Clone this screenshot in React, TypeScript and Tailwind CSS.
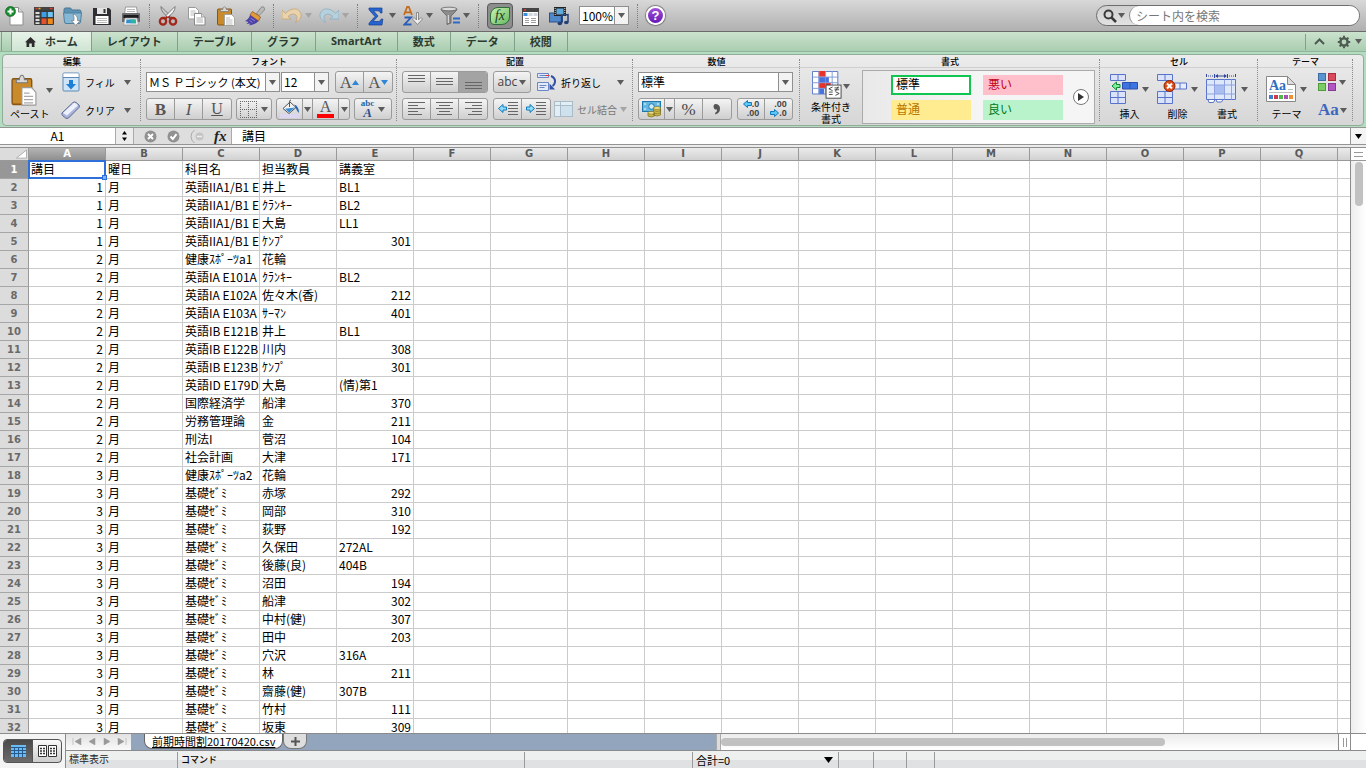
// src/App.tsx
import type { ReactNode } from 'react'

interface Lesson {
  period: string
  subject: string
  teacher: string
  room: string
}

const lessons: Lesson[] = [
  { period: '1', subject: '英語IIA1/B1 E', teacher: '井上', room: 'BL1' },
  { period: '1', subject: '英語IIA1/B1 E', teacher: 'ｸﾗﾝｷｰ', room: 'BL2' },
  { period: '1', subject: '英語IIA1/B1 E', teacher: '大島', room: 'LL1' },
  { period: '1', subject: '英語IIA1/B1 E', teacher: 'ｹﾝﾌﾟ', room: '301' },
  { period: '2', subject: '健康ｽﾎﾟｰﾂa1', teacher: '花輪', room: '' },
  { period: '2', subject: '英語IA E101A', teacher: 'ｸﾗﾝｷｰ', room: 'BL2' },
  { period: '2', subject: '英語IA E102A', teacher: '佐々木(香)', room: '212' },
  { period: '2', subject: '英語IA E103A', teacher: 'ｻｰﾏﾝ', room: '401' },
  { period: '2', subject: '英語IB E121B', teacher: '井上', room: 'BL1' },
  { period: '2', subject: '英語IB E122B', teacher: '川内', room: '308' },
  { period: '2', subject: '英語IB E123B', teacher: 'ｹﾝﾌﾟ', room: '301' },
  { period: '2', subject: '英語ID E179D', teacher: '大島', room: '(情)第1' },
  { period: '2', subject: '国際経済学', teacher: '船津', room: '370' },
  { period: '2', subject: '労務管理論', teacher: '金', room: '211' },
  { period: '2', subject: '刑法I', teacher: '菅沼', room: '104' },
  { period: '2', subject: '社会計画', teacher: '大津', room: '171' },
  { period: '3', subject: '健康ｽﾎﾟｰﾂa2', teacher: '花輪', room: '' },
  { period: '3', subject: '基礎ｾﾞﾐ', teacher: '赤塚', room: '292' },
  { period: '3', subject: '基礎ｾﾞﾐ', teacher: '岡部', room: '310' },
  { period: '3', subject: '基礎ｾﾞﾐ', teacher: '荻野', room: '192' },
  { period: '3', subject: '基礎ｾﾞﾐ', teacher: '久保田', room: '272AL' },
  { period: '3', subject: '基礎ｾﾞﾐ', teacher: '後藤(良)', room: '404B' },
  { period: '3', subject: '基礎ｾﾞﾐ', teacher: '沼田', room: '194' },
  { period: '3', subject: '基礎ｾﾞﾐ', teacher: '船津', room: '302' },
  { period: '3', subject: '基礎ｾﾞﾐ', teacher: '中村(健)', room: '307' },
  { period: '3', subject: '基礎ｾﾞﾐ', teacher: '田中', room: '203' },
  { period: '3', subject: '基礎ｾﾞﾐ', teacher: '穴沢', room: '316A' },
  { period: '3', subject: '基礎ｾﾞﾐ', teacher: '林', room: '211' },
  { period: '3', subject: '基礎ｾﾞﾐ', teacher: '齋藤(健)', room: '307B' },
  { period: '3', subject: '基礎ｾﾞﾐ', teacher: '竹村', room: '111' },
  { period: '3', subject: '基礎ｾﾞﾐ', teacher: '坂東', room: '309' },
]

const header = ['講目', '曜日', '科目名', '担当教員', '講義室']
const rows: string[][] = [
  header,
  ...lessons.map((l) => [l.period, '月', l.subject, l.teacher, l.room]),
]
const letters = 'ABCDEFGHIJKLMNOPQ'.split('')
const tabs = ['レイアウト', 'テーブル', 'グラフ', 'SmartArt', '数式', 'データ', '校閲']

// ---------- 共通パーツ ----------

function Caret({ light }: { light?: boolean }) {
  return (
    <svg viewBox="0 0 7 5" className={`h-[5px] w-[7px] shrink-0 ${light ? 'fill-[#a5a5a5]' : 'fill-[#5c5c5c]'}`}>
      <path d="M0 0h7L3.500 5z" />
    </svg>
  )
}

function ToolButton({ label, children, caret, light }: { label: string; children: ReactNode; caret?: boolean; light?: boolean }) {
  return (
    <button type="button" aria-label={label} className="flex shrink-0 items-center gap-[3px]">
      <svg viewBox="0 0 20 20" className="h-5 w-5">{children}</svg>
      {caret && <Caret light={light} />}
    </button>
  )
}

function Divider() {
  return <span className="mx-2 h-6 w-0 shrink-0 border-l border-dotted border-[#7d7d7d]" />
}

function Group({ title, className, children }: { title: string; className: string; children: ReactNode }) {
  return (
    <section className={`relative flex flex-col ${className}`}>
      <h2 className="h-[13px] border-b border-[#cfcfcf] text-center text-[9px] leading-[13px] font-medium text-black">{title}</h2>
      <div className="flex flex-1 items-start pt-[3px]">{children}</div>
      <span className="absolute top-1 right-0 bottom-1 border-r border-dotted border-[#8a8a8a]" />
    </section>
  )
}

function Segment({ children }: { children: ReactNode }) {
  return (
    <div className="flex h-[22px] shrink-0 divide-x divide-[#9b9b9b] overflow-hidden rounded-[3px] border border-[#9b9b9b] bg-linear-to-b from-[#f4f4f4] to-[#cfcfcf]">
      {children}
    </div>
  )
}

function Seg({ label, width = 'w-7', on, children }: { label: string; width?: string; on?: boolean; children: ReactNode }) {
  return (
    <button type="button" aria-label={label} className={`flex items-center justify-center gap-1 ${width} ${on ? 'bg-[#a3a3a3]' : ''}`}>
      {children}
    </button>
  )
}

function Picker({ label, value, className }: { label: string; value: string; className: string }) {
  return (
    <div className={`relative flex shrink-0 border border-[#8f8f8f] bg-white text-black ${className}`}>
      <select aria-label={label} className="w-full appearance-none bg-transparent pr-3.5 pl-0.5 outline-none">
        <option>{value}</option>
      </select>
      <span className="pointer-events-none absolute inset-y-0 right-0 flex w-3.5 items-center justify-center border-l border-[#8f8f8f] bg-[#f3f3f3]">
        <Caret />
      </span>
    </div>
  )
}

function BigButton({ label, children }: { label: ReactNode; children: ReactNode }) {
  return (
    <button type="button" className="flex shrink-0 flex-col items-center gap-[3px]">
      <span className="flex h-8 items-center gap-1">
        {children}
        <Caret />
      </span>
      <span className="text-[10px] leading-[12px] text-black">{label}</span>
    </button>
  )
}

// 横線を並べた配置アイコン。l は各行の [x, 幅]
function Lines({ rows: l, top = 1 }: { rows: number[][]; top?: number }) {
  return (
    <svg viewBox="0 0 17 16" className="h-4 w-[17px]" shapeRendering="crispEdges">
      {l.map(([x, w], i) => (
        <rect key={i} x={x} y={top + i * 3} width={w} height="1" fill="#666" />
      ))}
    </svg>
  )
}

// ---------- 標準ツールバー ----------

function Toolbar() {
  return (
    <div className="flex h-8 shrink-0 items-center border-b border-[#6b6b6b] bg-linear-to-b from-[#d8d8d8] to-[#b0b0b0] pr-1.5 pl-[5px]">
      <div className="flex shrink-0 gap-[9px]">
        <ToolButton label="新規">
          <path d="M5 1.500h8.500L18 6v13H5z" fill="#fff" stroke="#8d8d8d" />
          <path d="M13.500 1.500V6H18" fill="#ddd" stroke="#8d8d8d" />
          <circle cx="5.500" cy="5.500" r="5" fill="#168a2c" stroke="#0c5a1c" strokeWidth=".6" />
          <path d="M5.500 2.500v6M2.500 5.500h6" stroke="#fff" strokeWidth="2" />
        </ToolButton>
        <ToolButton label="テンプレート">
          <rect x="0" y="1" width="20" height="18" rx="1" fill="#3a3a3a" />
          <rect x="0" y="1" width="20" height="3" fill="#444" />
          <path d="M1.500 2.500h2M16 2.500h2.500" stroke="#e43d2c" strokeWidth="1.500" />
          <path d="M4.500 2.500h2" stroke="#f0b422" strokeWidth="1.500" />
          <path d="M1.500 6h4v2h-4zM1.500 9.500h4v2h-4zM1.500 13h4v2h-4zM1.500 16.200h4v1.800h-4z" fill="#ddd" />
          <path d="M7.500 6h5v5h-5z" fill="#3b9fe8" />
          <path d="M13.800 6h5v5h-5z" fill="#6cc5f5" />
          <path d="M7.500 12.500h5v5.500h-5z" fill="#e5502d" />
          <path d="M13.800 12.500h5v5.500h-5z" fill="#f08a1d" />
        </ToolButton>
        <ToolButton label="開く">
          <path d="M1 3.500q0-1.500 1.500-1.500h5l1.500 2h7.500q1.500 0 1.500 1.500V8H1z" fill="#5f93b5" stroke="#487795" />
          <path d="M.5 7h18l-1 9q-.2 1.500-1.500 1.500H3q-1.300 0-1.500-1.500z" fill="#86b8d6" stroke="#4f819f" />
          <path d="M10 8q5 1 4.500 6.500H17L12.800 19.500 8.500 14.500h2.500Q11.500 11 10 8z" fill="#fff" stroke="#6a6a6a" strokeWidth=".6" />
        </ToolButton>
        <ToolButton label="保存">
          <path d="M1 2h16l2 2v15H1z" fill="#2e2e33" />
          <rect x="5" y="2" width="10" height="6" fill="#e4e4e4" />
          <rect x="11.500" y="3" width="2" height="4" fill="#333" />
          <rect x="3.500" y="10" width="13" height="8" fill="#fff" />
          <path d="M5 12.500h10M5 14.500h10M5 16.500h10" stroke="#aaa" strokeWidth=".8" />
        </ToolButton>
        <ToolButton label="印刷">
          <path d="M4.500 1h11l1 7h-13z" fill="#fff" stroke="#9b9b9b" />
          <path d="M6 3.500h8M5.800 5.500h8.400" stroke="#bbb" />
          <path d="M1 8q0-1 1-1h16q1 0 1 1v8H1z" fill="#6a6a6e" />
          <path d="M2.500 9h15v3h-15z" fill="#1c1c1e" />
          <path d="M4 12h12l1.500 7h-15z" fill="#eee" stroke="#888" strokeWidth=".6" />
          <path d="M5.500 13.500h9l.6 3.800H5z" fill="#2f8fd0" />
          <path d="M9 13.500h5.500l.6 3.800H10z" fill="#2fb3a0" />
        </ToolButton>
      </div>
      <Divider />
      <div className="flex shrink-0 gap-[9px]">
        <ToolButton label="切り取り">
          <path d="M3 0.500Q2.500 3 5 6.500l7.500 7 1.500-2z" fill="#ccc" stroke="#666" strokeWidth=".8" />
          <path d="M17 0.500Q17.500 3 15 6.500l-7.500 7-1.500-2z" fill="#f5f5f5" stroke="#666" strokeWidth=".8" />
          <ellipse cx="5" cy="15.300" rx="3.200" ry="3.300" fill="none" stroke="#a3281c" strokeWidth="2.300" />
          <ellipse cx="15" cy="15.300" rx="3.200" ry="3.300" fill="none" stroke="#a3281c" strokeWidth="2.300" />
          <path d="M7 12.800l2.500-2.300M13 12.800l-2.500-2.300" stroke="#a3281c" strokeWidth="2" />
        </ToolButton>
        <ToolButton label="コピー">
          <path d="M1.500 1.500h7l3 3v8.500h-10z" fill="#fff" stroke="#999" />
          <path d="M3.500 5h5M3.500 7h6M3.500 9h6" stroke="#aaa" strokeWidth=".8" />
          <path d="M7.500 7.500h7l3.500 3.500v8h-10.500z" fill="#fff" stroke="#888" />
          <path d="M14.500 7.500V11H18" fill="#ddd" stroke="#888" strokeWidth=".7" />
          <path d="M9.500 12h6M9.500 14h6.500M9.500 16h6.500" stroke="#999" strokeWidth=".8" />
        </ToolButton>
        <ToolButton label="ペースト">
          <ClipboardShape />
        </ToolButton>
        <ToolButton label="書式のコピー">
          <path d="M11.500 7.500L16 1.500q1.500-1.500 3-.2t.3 3L14 9.500z" fill="#b9b9b9" stroke="#666" strokeWidth=".6" />
          <path d="M7.500 5.500L15.500 11l-2 4-8.500-6z" fill="#e29a3b" stroke="#8b4d12" strokeWidth=".7" />
          <path d="M5 9l8.500 6Q11 18.500 4 19.500l1.500-2-4 .5 2-2L0 15q4-2 5-6z" fill="#4b3fa6" />
          <path d="M5.500 12l4.500 3M4.500 14.500l3 2" stroke="#8e86d8" />
        </ToolButton>
      </div>
      <Divider />
      <div className="flex shrink-0 gap-[7px]">
        <ToolButton label="取り消す" caret light>
          <path d="M0 4v9h9L6 10.500q4-4 8-1.500 2.500 2.500-.5 7.500 6.500-3.500 5.500-8.500Q16.500 1 9 3.500 6 4.800 3.300 7.500z" fill="#e9d3ad" stroke="#c4a06a" strokeWidth=".7" />
        </ToolButton>
        <ToolButton label="やり直す" caret light>
          <path d="M20 4v9h-9l3-2.500q-4-4-8-1.500-2.500 2.500.5 7.500Q0 13 1 8 3.500 1 11 3.500q3 1.300 5.700 4z" fill="#b7d0dd" stroke="#86aabd" strokeWidth=".7" />
        </ToolButton>
      </div>
      <Divider />
      <div className="flex shrink-0 gap-[7px]">
        <ToolButton label="オート SUM" caret>
          <path d="M3 2h13v5h-1.500q-.5-2.200-2.500-2.200H7.500L12 10l-5 5.500h5.500q2 0 2.800-2.500h1.500L16 19H3v-1.800L9 10.500 3 3.800z" fill="#2664cf" stroke="#123d8f" strokeWidth=".7" />
        </ToolButton>
        <ToolButton label="並べ替え" caret>
          <path d="M1 9L4.200.800h1.600L9 9M2.300 6.300h5.400" fill="none" stroke="#c56a17" strokeWidth="1.700" />
          <path d="M1.500 11.500h6.500L1.500 18.500h7" fill="none" stroke="#2a5db5" strokeWidth="1.800" />
          <path d="M13.500 6.500h2v7.500l2.500-2.500 1.500 1.500-5 5.500-5-5.500 1.500-1.500 2.500 2.500z" fill="#eee" stroke="#777" strokeWidth=".8" />
        </ToolButton>
        <ToolButton label="フィルター" caret>
          <path d="M1 3q0 1.500 6 7v8.500l4-1.500v-7q6-5.500 6-7z" fill="#8c8c8c" stroke="#555" strokeWidth=".7" />
          <ellipse cx="9" cy="3" rx="8" ry="1.800" fill="#dcdcdc" stroke="#555" strokeWidth=".7" />
          <path d="M8.300 9v8" stroke="#ddd" strokeWidth="1.200" />
          <path d="M13 12.500h7M13 16.500h7" stroke="#2d69c8" strokeWidth="2" />
        </ToolButton>
      </div>
      <Divider />
      <div className="flex shrink-0 items-center gap-2">
        <button type="button" aria-label="数式バー" aria-pressed="true" className="flex h-[26px] w-[26px] items-center justify-center rounded border border-[#5a5a5a] bg-[#8d8d8d]">
          <span className="h-[18px] w-5 rounded-tl-lg rounded-br-lg rounded-bl-sm border border-[#2f6e3a] bg-linear-to-br from-[#c9f0b0] to-[#65bb63] font-['Liberation_Serif',serif] text-[14px] leading-[15px] text-[#1c3d20] italic">fx</span>
        </button>
        <ToolButton label="ツールボックス">
          <rect x="1.500" y="2.500" width="16" height="17" fill="#fff" stroke="#555" />
          <path d="M1 2h17v4H1z" fill="#454545" />
          <path d="M3 4h2" stroke="#e33" strokeWidth="1.500" />
          <path d="M2.500 7h4v3h-4z" fill="#3b8ee0" />
          <path d="M7.500 7h4v3h-4zM12.500 7h4v3h-4z" fill="#cfd6dd" />
          <path d="M4 12.500h4M4 14.500h4M4 16.500h4M10 12.500h5M10 14.500h5M10 16.500h5" stroke="#888" strokeWidth=".8" />
        </ToolButton>
        <ToolButton label="メディア">
          <rect x=".5" y="7" width="13" height="9" fill="#4f87c9" stroke="#2b5088" />
          <rect x="5" y="1" width="12" height="9" fill="#222" />
          <rect x="7.500" y="2.500" width="7" height="6" fill="#5fa9dd" />
          <path d="M6.200 2v8M15.800 2v8" stroke="#ddd" strokeDasharray="1 1" />
          <path d="M12.500 17V9.500l6.500-1V16" fill="none" stroke="#243f78" strokeWidth="1.500" />
          <ellipse cx="10.800" cy="17.500" rx="2.300" ry="1.800" fill="#243f78" />
          <ellipse cx="17.300" cy="16.500" rx="2.300" ry="1.800" fill="#243f78" />
        </ToolButton>
        <Picker label="ズーム" value="100%" className="ml-0.5 h-[19px] w-[50px] text-[12px] leading-[17px]" />
      </div>
      <Divider />
      <button type="button" aria-label="ヘルプ" className="flex h-[19px] w-[19px] shrink-0 items-center justify-center rounded-full border-2 border-white bg-linear-to-b from-[#a04fd8] to-[#6a12b5] font-['Liberation_Sans',sans-serif] text-[13px] leading-none font-bold text-white shadow-[0_0_1px_1px_#777]">
        ?
      </button>
      <form className="ml-auto flex h-[21px] w-[264px] shrink-0 items-center rounded-full border border-[#6e6e6e] bg-linear-to-b from-[#cfcfcf] to-[#e2e2e2]">
        <button type="button" aria-label="検索オプション" className="flex w-8 items-center justify-center gap-px pl-0.5">
          <svg viewBox="0 0 14 14" className="h-3.5 w-3.5">
            <circle cx="5.500" cy="5.500" r="4" fill="none" stroke="#3a3a3a" strokeWidth="2" />
            <path d="M8.500 8.500l4.500 4.500" stroke="#3a3a3a" strokeWidth="2.500" />
          </svg>
          <Caret />
        </button>
        <input aria-label="シート内を検索" placeholder="シート内を検索" className="h-full min-w-0 flex-1 rounded-full border-l border-[#8a8a8a] bg-white pl-1.5 text-[12px] placeholder-[#777] outline-none" />
      </form>
    </div>
  )
}

function ClipboardShape() {
  return (
    <>
      <rect x="1.500" y="3" width="14" height="16" rx="1" fill="#c98a2c" stroke="#87560f" />
      <path d="M4.500 5.500V3.500h2.200Q7 .800 8.500.800T10.300 3.500h2.200v2z" fill="#d9d9d9" stroke="#777" strokeWidth=".7" />
      <path d="M8.500 8.500h7l3 3v8h-10z" fill="#fff" stroke="#999" strokeWidth=".8" />
      <path d="M10 12h4M10 14h6.500M10 16h6.500M10 18h6.500" stroke="#aaa" strokeWidth=".8" />
    </>
  )
}

// ---------- リボン ----------

function RibbonTabs() {
  return (
    <nav className="flex h-5 shrink-0 items-stretch border-b border-[#8fb69b] bg-linear-to-b from-[#cce3ce] to-[#a9cdb0] pl-px text-[11px] font-bold text-[#2e3a30]">
      <span className="w-[11px] border-r border-l border-[#7fa388]" />
      <button type="button" className="flex items-center gap-[9px] border-r border-[#7fa388] bg-linear-to-b from-[#e8f3e9] to-[#cfe5d3] px-[13px]">
        <svg viewBox="0 0 11 10" className="h-2.5 w-[11px] fill-[#2c2c2c]">
          <path d="M5.500 0L11 5.200H9.500V10H6.800V6.500H4.200V10H1.500V5.200H0z" />
        </svg>
        ホーム
      </button>
      {tabs.map((t) => (
        <button key={t} type="button" className={`border-r border-[#7fa388] px-[15px] ${t === 'SmartArt' ? "font-['Open_Sans',sans-serif]" : ''}`}>
          {t}
        </button>
      ))}
      <div className="ml-auto flex items-center gap-3 pr-1">
        <span className="-mr-1 h-4 border-l border-[#7fa388]" />
        <button type="button" aria-label="リボンを最小化">
          <svg viewBox="0 0 11 7" className="h-[7px] w-[11px]">
            <path d="M1 6l4.500-4.500L10 6" fill="none" stroke="#4c5a4f" strokeWidth="2" />
          </svg>
        </button>
        <button type="button" aria-label="リボンの設定" className="flex items-center gap-1">
          <svg viewBox="0 0 14 14" className="h-3.5 w-3.5">
            <circle cx="7" cy="7" r="3.600" fill="none" stroke="#4c5a4f" strokeWidth="2.400" />
            <path d="M7 .800v2M7 11.200v2M.800 7h2M11.200 7h2M2.600 2.600L4 4M10 10l1.400 1.400M11.400 2.600L10 4M4 10l-1.400 1.400" stroke="#4c5a4f" strokeWidth="2" />
          </svg>
          <Caret />
        </button>
      </div>
    </nav>
  )
}

function EditGroup() {
  return (
    <Group title="編集" className="w-[138px] shrink-0">
      <div className="flex pt-0.5 pl-[7px]">
        <button type="button" className="flex shrink-0 flex-col items-start gap-px">
          <span className="flex h-[34px] items-center gap-2">
            <svg viewBox="0 0 20 20" className="h-8 w-7" preserveAspectRatio="none"><ClipboardShape /></svg>
            <Caret />
          </span>
          <span className="text-[10px] leading-[12px]">ペースト</span>
        </button>
      </div>
      <div className="flex flex-col gap-[6px] pl-2">
        <button type="button" className="flex h-[22px] items-center text-[10px]">
          <svg viewBox="0 0 20 20" className="mr-1 h-5 w-5">
            <rect x="2" y="1" width="16" height="18" rx="1" fill="#cfe4f6" stroke="#5c88b5" />
            <path d="M2.500 1.500h15v4h-15z" fill="#fff" />
            <path d="M2 5.500h16" stroke="#5c88b5" />
            <path d="M8 8h4v4h3l-5 5.500L5 12h3z" fill="#1f7fd6" />
          </svg>
          フィル
          <span className="ml-[9px]"><Caret /></span>
        </button>
        <button type="button" className="flex h-[22px] items-center text-[10px]">
          <svg viewBox="0 0 20 20" className="mr-1 h-5 w-5">
            <path d="M1 13L12 2.500q1.500-1.200 3 0l3 2.500q1 1 0 2.500L7.500 18Q6 19 4.500 18L1.500 15.500Q.5 14.500 1 13z" fill="#a9b5db" stroke="#5d6a92" />
            <path d="M2 13L12.500 3.200q1-.7 2 0L17 5.300 6 15.500z" fill="#edf1fc" />
          </svg>
          クリア
          <span className="ml-[9px]"><Caret /></span>
        </button>
      </div>
    </Group>
  )
}

function FontGroup() {
  const serif = "font-['Liberation_Serif',serif] text-[#555]"
  return (
    <Group title="フォント" className="w-[256px] shrink-0">
      <div className="flex flex-col gap-[5px] pl-[5px]">
        <div className="flex items-center">
          <Picker label="フォント" value="ＭＳ Ｐゴシック (本文)" className="h-5 w-[134px] text-[11px]" />
          <span className="w-px" />
          <Picker label="フォントサイズ" value="12" className="h-5 w-12 text-[12px]" />
          <span className="w-1.5" />
          <Segment>
            <Seg label="フォントの拡大">
              <span className={`-mr-1 text-[17px] leading-none ${serif}`}>A</span>
              <svg viewBox="0 0 7 5" className="h-[5px] w-[7px] fill-[#2f86d6]"><path d="M0 5h7L3.500 0z" /></svg>
            </Seg>
            <Seg label="フォントの縮小">
              <span className={`-mr-1 text-[17px] leading-none ${serif}`}>A</span>
              <svg viewBox="0 0 7 5" className="h-[5px] w-[7px] fill-[#2f86d6]"><path d="M0 0h7L3.500 5z" /></svg>
            </Seg>
          </Segment>
        </div>
        <div className="flex items-center gap-1">
          <Segment>
            <Seg label="太字"><b className={`text-[17px] leading-none ${serif}`}>B</b></Seg>
            <Seg label="斜体"><i className={`text-[17px] leading-none ${serif}`}>I</i></Seg>
            <Seg label="下線"><u className={`text-[16px] leading-none ${serif}`}>U</u></Seg>
          </Segment>
          <Segment>
            <Seg label="罫線" width="w-[34px]">
              <svg viewBox="0 0 17 17" className="h-[17px] w-[17px]" fill="none" stroke="#666" strokeDasharray="1 1">
                <path d="M.5 0v17M8.500 0v17M16.500 0v17M0 .5h17M0 8.500h17M0 16.500h17" />
              </svg>
              <Caret />
            </Seg>
          </Segment>
          <Segment>
            <Seg label="塗りつぶしの色" width="w-[26px]">
              <svg viewBox="0 0 20 20" className="h-5 w-5">
                <path d="M0 15h20v4H0z" fill="#ddd6f0" />
                <path d="M3 9.500L10 3l6 5.500-7 6z" fill="#f3f3f3" stroke="#555" />
                <path d="M5 9.800l10-1.200-6 5z" fill="#3a8ed6" />
                <path d="M9.500 8V3q0-2 1.500-2" fill="none" stroke="#555" />
                <path d="M14.500 5.500q4.500 2 4.500 8.500-2-1.500-3.500-5.500z" fill="#2466b5" />
              </svg>
            </Seg>
            <Seg label="塗りつぶしの色を選択" width="w-2.5"><Caret /></Seg>
            <Seg label="フォントの色" width="w-[26px]">
              <span className={`border-b-4 border-[#f00] px-[3px] text-[16px] leading-[14px] ${serif}`}>A</span>
            </Seg>
            <Seg label="フォントの色を選択" width="w-2.5"><Caret /></Seg>
          </Segment>
          <Segment>
            <Seg label="文字の効果" width="w-9">
              <span className="flex flex-col items-center font-['Liberation_Serif',serif] font-bold text-[#2466a8]">
                <span className="text-[9px] leading-[8px]">abc</span>
                <i className="text-[13px] leading-[12px] text-[#2a4f8f]">A</i>
              </span>
              <Caret />
            </Seg>
          </Segment>
        </div>
      </div>
    </Group>
  )
}

const full = [[0, 17], [0, 17], [0, 17], [0, 17]]

function AlignGroup() {
  return (
    <Group title="配置" className="w-[236px] shrink-0">
      <div className="flex flex-col gap-[5px] pl-[5px]">
        <div className="flex items-center">
          <Segment>
            <Seg label="上揃え"><Lines rows={full.slice(1)} top={1} /></Seg>
            <Seg label="中央揃え"><Lines rows={full.slice(1)} top={4} /></Seg>
            <Seg label="下揃え" on><Lines rows={full.slice(1)} top={8} /></Seg>
          </Segment>
          <span className="w-[5px]" />
          <Segment>
            <Seg label="文字の方向" width="w-9">
              <span className="-mr-0.5 font-['Open_Sans',sans-serif] text-[12px] leading-none text-[#444]">abc</span>
              <Caret />
            </Seg>
          </Segment>
          <button type="button" className="ml-[6px] flex items-center gap-1 text-[10px]">
            <svg viewBox="0 0 20 20" className="h-5 w-5">
              <path d="M.5 1.500h11v4H.5zM.5 10.500h11v8H.5z" fill="#e2eafb" stroke="#6a86c4" />
              <path d="M2.500 3.500h7" stroke="#6a86c4" />
              <path d="M8.500 3.500h4" stroke="#e0352b" />
              <path d="M2.500 13.500h7M2.500 15.500h5" stroke="#6a86c4" />
              <path d="M14 4q4.500 2 4 6-.5 3-2.500 4" fill="none" stroke="#3350a8" strokeWidth="2" />
              <path d="M12.500 11.500v6h5.500z" fill="#3350a8" />
            </svg>
            折り返し
            <span className="ml-3"><Caret /></span>
          </button>
        </div>
        <div className="flex items-center">
          <Segment>
            <Seg label="左揃え"><Lines rows={[[0, 17], [0, 10], [0, 17], [0, 10], [0, 14]]} /></Seg>
            <Seg label="中央揃え (横)"><Lines rows={[[0, 17], [3, 11], [0, 17], [3, 11], [1, 15]]} /></Seg>
            <Seg label="右揃え"><Lines rows={[[0, 17], [7, 10], [0, 17], [7, 10], [3, 14]]} /></Seg>
          </Segment>
          <span className="w-[5px]" />
          <Segment>
            <Seg label="インデントを減らす">
              <svg viewBox="0 0 20 16" className="h-4 w-5">
                <path d="M10 1.500h10M10 4.500h10M10 7.500h10M10 10.500h10M10 13.500h10" stroke="#666" />
                <path d="M8.500 6H5V3.500L.5 7.500 5 11.500V9h3.500z" fill="#8fdcfb" stroke="#1179bd" />
              </svg>
            </Seg>
            <Seg label="インデントを増やす">
              <svg viewBox="0 0 20 16" className="h-4 w-5">
                <path d="M10 1.500h10M10 4.500h10M10 7.500h10M10 10.500h10M10 13.500h10" stroke="#666" />
                <path d="M.5 6H4V3.500L8.500 7.500 4 11.500V9H.5z" fill="#8fdcfb" stroke="#1179bd" />
              </svg>
            </Seg>
          </Segment>
          <button type="button" className="ml-[3px] flex items-center gap-[3px] text-[10px] text-[#777]">
            <svg viewBox="0 0 20 18" className="h-[18px] w-5">
              <rect x=".5" y="1.500" width="18" height="15" fill="#e3edf4" stroke="#a9bcc9" />
              <path d="M6.500 1.500v15M.5 5.500h18" stroke="#a9bcc9" />
              <path d="M7 6h11v10H7z" fill="#cfe1ec" />
            </svg>
            セル結合
            <Caret light />
          </button>
        </div>
      </div>
    </Group>
  )
}

function DecimalLabel({ left }: { left?: boolean }) {
  const arrow = (
    <svg viewBox="0 0 9 8" className="h-2 w-[9px]">
      <path d={left ? 'M8.500 2.500H4.500V.5L.5 4l4 3.500v-2h4z' : 'M.5 2.500h4V.5l4 3.500-4 3.500v-2h-4z'} fill="#5cc8f7" stroke="#1179bd" />
    </svg>
  )
  return (
    <span className="flex flex-col items-end font-['Liberation_Sans',sans-serif] text-[9px] leading-[9px] font-bold text-[#444]">
      {left ? <span className="flex">{arrow}.0</span> : <span>.00</span>}
      {left ? <span>.00</span> : <span className="flex">{arrow}.0</span>}
    </span>
  )
}

function NumberGroup() {
  return (
    <Group title="数値" className="w-[167px] shrink-0">
      <div className="flex flex-col gap-[5px] pl-[5px]">
        <div className="flex h-[22px] items-center">
          <Picker label="表示形式" value="標準" className="h-5 w-[155px] text-[12px]" />
        </div>
        <div className="flex items-center gap-[5px]">
          <Segment>
            <Seg label="通貨" width="w-[26px]">
              <svg viewBox="0 0 20 18" className="h-[18px] w-5">
                <rect x=".5" y="1.500" width="18" height="10" fill="#63b7e0" stroke="#2277aa" />
                <circle cx="9.500" cy="6.500" r="2.800" fill="#cdeaf7" stroke="#2277aa" />
                <path d="M2 4h2M15 4h2M2 9h2" stroke="#fff" />
                <path d="M6 13v3q3 2 6.500 0v-3zM11.500 8v7q3.500 2 7 0V8z" fill="#cbb84e" stroke="#7d6c19" strokeWidth=".7" />
                <ellipse cx="9.200" cy="12.800" rx="3.300" ry="1.400" fill="#ecdf8b" stroke="#7d6c19" strokeWidth=".6" />
                <ellipse cx="15" cy="8" rx="3.500" ry="1.500" fill="#ecdf8b" stroke="#7d6c19" strokeWidth=".6" />
                <path d="M11.500 10.500q3.500 2 7 0M11.500 12.800q3.500 2 7 0" fill="none" stroke="#7d6c19" strokeWidth=".6" />
              </svg>
            </Seg>
            <Seg label="通貨を選択" width="w-2.5"><Caret /></Seg>
            <Seg label="パーセント"><span className="font-['Liberation_Serif',serif] text-[17px] leading-none text-[#444]">%</span></Seg>
            <Seg label="桁区切り">
              <svg viewBox="0 0 8 12" className="h-3 w-2"><path d="M2 1q5 0 5 4.500Q7 10 2.500 11.500L2 10q2.500-1.500 2-3.500H2Q.5 5.500.5 3.500T2 1z" fill="#555" /></svg>
            </Seg>
          </Segment>
          <Segment>
            <Seg label="小数点以下の桁数を増やす" width="w-[27px]"><DecimalLabel left /></Seg>
            <Seg label="小数点以下の桁数を減らす" width="w-[27px]"><DecimalLabel /></Seg>
          </Segment>
        </div>
      </div>
    </Group>
  )
}

const styleSwatches = [
  { name: '標準', className: 'bg-white text-black border-2 border-[#10c650] pl-[3px] leading-[13px]' },
  { name: '悪い', className: 'bg-[#ffbfcb] text-[#c00020] pl-[5px] leading-[17px]' },
  { name: '普通', className: 'bg-[#ffec91] text-[#b57500] pl-[5px] leading-[17px]' },
  { name: '良い', className: 'bg-[#b9f3cb] text-[#007a1c] pl-[5px] leading-[17px]' },
]

function StyleGroup() {
  return (
    <Group title="書式" className="min-w-[300px] flex-1">
      <div className="flex flex-1 items-start pr-[5px] pl-[11px]">
        <button type="button" className="flex w-10 shrink-0 flex-col items-center">
          <span className="flex items-center gap-px">
            <svg viewBox="0 0 32 32" className="h-[30px] w-[30px]">
              <path d="M.5.5h27v24H.5z" fill="#fff" stroke="#5577c8" />
              <path d="M7 0h7v6H7zM7 12.500h13v6H7z" fill="#e8332c" />
              <path d="M7 6.500h11v6H7zM7 18.500h6v6H7z" fill="#4a72dc" />
              <path d="M7.500 0v25M14.500 0v25M21.500 0v25M0 6.500h28M0 12.500h28M0 18.500h28" stroke="#7c96da" fill="none" />
              <rect x="15" y="15" width="16" height="14" fill="#fff" stroke="#444" />
              <path d="M22 17l-4 2 4 2M18 22.500h4M18 25h4M24 18h5M24 20h5M28 16.500l-3 5M25 22l4 2-4 2" fill="none" stroke="#333" strokeWidth=".9" />
            </svg>
            <Caret />
          </span>
          <span className="text-[10px] leading-[12px]">条件付き<br />書式</span>
        </button>
        <div className="-mt-px ml-[11px] flex h-[54px] flex-1 items-center border border-[#ababab] bg-linear-to-r from-[#e9e9e9] via-[#f5f5f5] to-[#f5f5f5] pr-[5px] pl-7">
          <div className="grid flex-1 grid-cols-2 gap-x-3 gap-y-[5px]">
            {styleSwatches.map((s) => (
              <button key={s.name} type="button" className={`flex h-5 items-start text-[12px] ${s.className}`}>
                {s.name}
              </button>
            ))}
          </div>
          <button type="button" aria-label="スタイルをもっと表示" className="ml-[10px] flex h-4 w-4 items-center justify-center rounded-full border border-[#777] bg-white">
            <svg viewBox="0 0 6 8" className="h-2 w-1.5 fill-[#333]"><path d="M0 0l6 4-6 4z" /></svg>
          </button>
        </div>
      </div>
    </Group>
  )
}

function CellGroup() {
  return (
    <Group title="セル" className="w-[158px] shrink-0">
      <div className="flex gap-2 pt-0.5 pl-[10px]">
        <BigButton label="挿入">
          <svg viewBox="0 0 28 30" className="h-[30px] w-7">
            <path d="M.5.5h15v6H.5zM.5 17.500h15v12H.5z" fill="#dbe3fb" stroke="#5873c9" />
            <path d="M8 .5v6M8 17.500v12M.5 23.500h15" stroke="#5873c9" />
            <path d="M12.500 8.500h15v6.500h-15z" fill="#3e74e0" stroke="#2950b0" />
            <path d="M20 8.500V15" stroke="#2950b0" />
            <path d="M10 10.500H6.500V8L2 12l4.500 4v-2.500H10z" fill="#7df09a" stroke="#0d8a33" />
          </svg>
        </BigButton>
        <BigButton label="削除">
          <svg viewBox="0 0 30 30" className="h-[30px] w-[30px]">
            <path d="M.5.5h15v6H.5zM.5 17.500h15v12H.5z" fill="#dbe3fb" stroke="#5873c9" />
            <path d="M8 .5v6M8 17.500v12M.5 23.500h15" stroke="#5873c9" />
            <path d="M15.500 9h14v6h-14zM23 9v6" fill="#e9eefd" stroke="#5873c9" />
            <circle cx="12.500" cy="12" r="5.500" fill="#dd4a14" stroke="#8e2505" />
            <path d="M10 9.500l5 5M15 9.500l-5 5" stroke="#fff" strokeWidth="2" />
          </svg>
        </BigButton>
        <BigButton label="書式">
          <svg viewBox="0 0 31 30" className="h-[30px] w-[31px]">
            <path d="M.5 0v3M8.500 0v4M21.500 0v4M29.500 0v3" stroke="#33469c" />
            <path d="M10 2h10" stroke="#33469c" />
            <path d="M2 2h6M23 2h6" stroke="#33469c" strokeDasharray="1 1" />
            <path d="M12 0l-3 2 3 2zM18 0l3 2-3 2z" fill="#33469c" />
            <path d="M.5 5.500h29v20H.5z" fill="#dfe7fb" stroke="#5873c9" />
            <path d="M8.500 11h10v9h-10z" fill="#a9bdf1" />
            <path d="M8.500 5.500v20M18.500 5.500v20M.5 11h29M.5 20h29M25.500 5.500v20" stroke="#8ea3e0" />
            <path d="M2 25.500h7l-1.500 3H3zM10 25.500h7l-1.500 2.500H11z" fill="#fff" stroke="#5873c9" />
          </svg>
        </BigButton>
      </div>
    </Group>
  )
}

function ThemeGroup() {
  return (
    <Group title="テーマ" className="w-[95px] shrink-0">
      <div className="flex gap-[11px] pt-0.5 pl-2">
        <BigButton label="テーマ">
          <svg viewBox="0 0 30 28" className="h-7 w-[30px]">
            <path d="M.5 1.500h21l8 8v17H.5z" fill="#fff" stroke="#888" />
            <path d="M21.500 1.500v8h8z" fill="#ddd" stroke="#888" />
            <path d="M3 17.500h24M22 14.500h5" stroke="#bbb" />
            <text x="3" y="15" fontSize="14" fontFamily="Liberation Serif" fontWeight="bold" fill="#2f6fbf">Aa</text>
            <path d="M3 20h4v4H3z" fill="#3f7fc9" />
            <path d="M8 20h4v4H8z" fill="#d2384a" />
            <path d="M13 20h4v4h-4z" fill="#52b54c" />
            <path d="M18 20h4v4h-4z" fill="#a54fb5" />
            <path d="M23 20h4v4h-4z" fill="#ef8f35" />
          </svg>
        </BigButton>
        <div className="flex flex-col items-start gap-[10px]">
          <button type="button" aria-label="配色" className="flex items-center gap-[3px]">
            <svg viewBox="0 0 18 18" className="h-[18px] w-[18px]">
              <rect x=".5" y=".5" width="7" height="7" fill="#5a93cf" stroke="#3b6ca3" />
              <rect x="10.500" y=".5" width="7" height="7" fill="#d94a5c" stroke="#a82e3f" />
              <rect x=".5" y="10.500" width="7" height="7" fill="#7ccc66" stroke="#4f9a3b" />
              <rect x="10.500" y="10.500" width="7" height="7" fill="#b455c4" stroke="#853a93" />
            </svg>
            <Caret />
          </button>
          <button type="button" aria-label="テーマのフォント" className="flex items-center gap-px font-['Liberation_Serif',serif] text-[17px] leading-[18px] font-bold text-[#3f66bd]">
            Aa
            <Caret />
          </button>
        </div>
      </div>
    </Group>
  )
}

function Ribbon() {
  return (
    <div className="flex h-[75px] shrink-0 bg-[#b3dcc0] px-0.5 pt-0.5 pb-px">
      <div className="flex flex-1 rounded-[4px] border border-[#8fae98] bg-linear-to-b from-[#ececec] to-[#d6d6d6] pr-2.5">
        <EditGroup />
        <FontGroup />
        <AlignGroup />
        <NumberGroup />
        <StyleGroup />
        <CellGroup />
        <ThemeGroup />
      </div>
    </div>
  )
}

// ---------- 数式バー ----------

function FormulaBar() {
  return (
    <div className="flex h-[18px] shrink-0 items-stretch border-y border-[#949494] bg-[#dedede]">
      <input aria-label="名前ボックス" defaultValue="A1" className="w-[116px] border-r border-[#aaa] bg-white text-center text-[12px] outline-none" />
      <button type="button" aria-label="名前の選択" className="flex w-[18px] flex-col items-center justify-center border-r border-[#aaa] bg-[#ececec]">
        <svg viewBox="0 0 5 10" className="h-2.5 w-[5px] fill-black"><path d="M0 3.500h5L2.500 0zM0 6.500h5L2.500 10z" /></svg>
      </button>
      <div className="flex w-[98px] items-center gap-[10px] border-r border-[#aaa] pl-2.5">
        <button type="button" aria-label="キャンセル">
          <svg viewBox="0 0 13 13" className="h-[13px] w-[13px]">
            <circle cx="6.500" cy="6.500" r="6" fill="#919191" />
            <path d="M4 4l5 5M9 4l-5 5" stroke="#fff" strokeWidth="2" />
          </svg>
        </button>
        <button type="button" aria-label="入力">
          <svg viewBox="0 0 13 13" className="h-[13px] w-[13px]">
            <circle cx="6.500" cy="6.500" r="6" fill="#919191" />
            <path d="M3.500 6.500L5.800 9 9.500 4.200" fill="none" stroke="#fff" strokeWidth="2" />
          </svg>
        </button>
        <button type="button" aria-label="数式パレット" className="flex items-center gap-1">
          <svg viewBox="0 0 14 15" className="h-[15px] w-3.5">
            <path d="M4.500 1Q1 3.500 1 7.500T4.500 14" fill="none" stroke="#aaa" />
            <circle cx="9.500" cy="7.500" r="4" fill="#c4c4c4" />
            <path d="M7 7.500h5" stroke="#eee" strokeWidth="1.500" />
          </svg>
          <span className="pl-[6px] font-['Liberation_Serif',serif] text-[15px] leading-none font-bold text-[#222] italic">fx</span>
        </button>
      </div>
      <input aria-label="数式" defaultValue="講目" className="min-w-0 flex-1 bg-white pl-[10px] text-[12px] outline-none" />
      <button type="button" aria-label="数式バーを広げる" className="flex w-4 items-center justify-center border-l border-[#949494] bg-[#f4f4f4]">
        <svg viewBox="0 0 7 5" className="h-[5px] w-[7px] fill-black"><path d="M0 0h7L3.500 5z" /></svg>
      </button>
    </div>
  )
}

// ---------- シート ----------

function isNumber(v: string) {
  return /^\d+$/.test(v)
}

function Sheet() {
  return (
    <div className="flex min-h-0 flex-1 border-b border-[#8b8b8b]">
      <div className="min-w-0 flex-1 overflow-hidden border-r border-[#8b8b8b] bg-white">
        <table className="w-full table-fixed border-separate border-spacing-0">
          <colgroup>
            <col className="w-[29px]" />
            {letters.map((l) => (
              <col key={l} className="w-[77px]" />
            ))}
            <col />
          </colgroup>
          <thead className="font-['DejaVu_Sans',sans-serif] text-[10px] leading-3 font-bold text-[#5a5a5a]">
            <tr className="h-[13px]">
              <th className="border-r border-b border-[#999] bg-[#dcdcdc] p-0">
                <svg viewBox="0 0 12 10" className="ml-auto h-2.5 w-3 fill-white stroke-[#aaa] pr-px"><path d="M11.500.5v9H.5z" /></svg>
              </th>
              {letters.map((l) => (
                <th
                  key={l}
                  scope="col"
                  className={`border-r border-b border-[#999] p-0 ${l === 'A' ? 'bg-linear-to-b from-[#b5b5b5] to-[#8f8f8f] text-white' : 'bg-linear-to-b from-[#ebebeb] to-[#d2d2d2]'}`}
                >
                  {l}
                </th>
              ))}
              <th className="border-b border-[#999] bg-linear-to-b from-[#ebebeb] to-[#d2d2d2] p-0" />
            </tr>
          </thead>
          <tbody className="text-[12px] leading-[16px] text-black">
            {rows.map((row, r) => (
              <tr key={r} className="h-[18px]">
                <th
                  scope="row"
                  className={`border-r border-b border-r-[#999] border-b-[#a6a6a6] p-0 font-['DejaVu_Sans',sans-serif] text-[10px] font-bold ${r === 0 ? 'bg-[#979797] text-white' : 'bg-[#dcdcdc] text-[#6a6a6a]'}`}
                >
                  {r + 1}
                </th>
                {letters.map((l, c) => {
                  const value = row[c] ?? ''
                  const active = r === 0 && c === 0
                  return (
                    <td key={l} className={`h-[18px] border-r border-b border-[#cbcbcb] p-0 ${active ? 'relative' : ''}`}>
                      <div className={`h-[17px] overflow-hidden px-0.5 whitespace-nowrap ${isNumber(value) ? 'text-right' : ''}`}>{value}</div>
                      {active && (
                        <span className="absolute -inset-px border-2 border-[#2e6fd9]">
                          <span className="absolute -right-[3px] -bottom-[3px] h-[5px] w-[5px] border border-[#2e6fd9] bg-[#7db1f7]" />
                        </span>
                      )}
                    </td>
                  )
                })}
                <td className="border-b border-[#cbcbcb] p-0" />
              </tr>
            ))}
          </tbody>
        </table>
      </div>
      <div className="flex w-[15px] shrink-0 flex-col bg-linear-to-r from-[#ededed] to-white">
        <div className="flex h-[13px] flex-col items-center justify-center gap-[3px] border-b border-[#999] bg-white">
          <span className="h-px w-[9px] bg-[#999]" />
          <span className="h-px w-[9px] bg-[#999]" />
        </div>
        <div className="mx-auto mt-px h-11 w-2 rounded-full bg-[#c1c1c1]" />
      </div>
    </div>
  )
}

// ---------- 下部 ----------

const navArrows = [
  { label: '最初のシート', d: 'M1 0v7M9 0v7L3 3.500z' },
  { label: '前のシート', d: 'M8 0v7L2 3.500z' },
  { label: '次のシート', d: 'M2 0v7L8 3.500z' },
  { label: '最後のシート', d: 'M9 0v7M1 0v7L7 3.500z' },
]

function SheetTabs() {
  return (
    <div className="flex h-[17px] border-b border-[#8b8b8b] bg-white">
      <div className="flex w-1/2 items-stretch bg-[#93a5bd]">
        <div className="flex w-[65px] items-center gap-[5px] bg-linear-to-b from-[#e2e2e2] to-[#fafafa] pb-0.5 pl-[6px]">
          {navArrows.map((a) => (
            <button key={a.label} type="button" aria-label={a.label}>
              <svg viewBox="0 0 10 7" className="h-[7px] w-2.5 fill-[#999] stroke-[#999]" strokeWidth=".5"><path d={a.d} /></svg>
            </button>
          ))}
        </div>
        <button type="button" className="ml-[13px] h-[15px] rounded-b-lg border border-t-0 border-[#666] bg-white px-[7px] text-[11px] leading-[14px] text-black underline">
          前期時間割20170420.csv
        </button>
        <button type="button" aria-label="シートの追加" className="flex h-[15px] w-6 items-center justify-center rounded-b-lg border border-t-0 border-[#777] bg-[#dedede]">
          <svg viewBox="0 0 9 9" className="h-[9px] w-[9px]"><path d="M4.500 0v9M0 4.500h9" stroke="#555" strokeWidth="2" /></svg>
        </button>
      </div>
      <div className="w-[5px] border-x border-[#aaa] bg-[#dcdcdc]" />
      <div className="flex flex-1 items-center bg-linear-to-b from-[#ececec] to-white">
        <div className="h-2 w-[72%] rounded-full bg-[#c1c1c1]" />
      </div>
      <div className="flex w-[13px] items-center justify-center gap-0.5 border-x border-[#8b8b8b] bg-white">
        <span className="h-[9px] w-px bg-[#999]" />
        <span className="h-[9px] w-px bg-[#999]" />
      </div>
      <div className="w-[15px]" />
    </div>
  )
}

function StatusBar() {
  const cell = 'shrink-0 border-r border-[#9a9a9a]'
  return (
    <div className="flex h-[17px] bg-linear-to-b from-[#eef0ef] from-50% to-[#e0e1e2] to-50% pt-px pr-0.5 text-[10px] leading-[14px] text-black">
      <div className={`${cell} w-28 pl-[3px] text-[#222]`}>標準表示</div>
      <div className={`${cell} w-[347px] pl-[3px] text-[9px] leading-4 font-medium`}>コマンド</div>
      <div className={`${cell} w-[168px]`} />
      <button type="button" className={`${cell} flex w-[146px] items-center justify-between pr-[5px] pl-[3px] text-[11px]`}>
        合計=0
        <svg viewBox="0 0 9 6" className="h-1.5 w-[9px] fill-black"><path d="M0 0h9L4.500 6z" /></svg>
      </button>
      <div className={`${cell} w-[35px]`} />
      <div className={`${cell} w-[33px]`} />
      <div className={`${cell} w-7`} />
    </div>
  )
}

function Bottom() {
  return (
    <div className="flex shrink-0">
      <div className="flex w-[66px] items-center justify-center border-r border-[#8b8b8b] bg-[#f4f4f4]">
        <div className="flex h-6 w-[59px] overflow-hidden rounded-[4px] border border-[#555] bg-linear-to-b from-[#fafafa] to-[#cdcdcd]">
          <button type="button" aria-label="標準表示" aria-pressed="true" className="flex flex-1 items-center justify-center bg-linear-to-b from-[#4a4a4a] to-[#6b6b6b]">
            <svg viewBox="0 0 15 12" className="h-3 w-[15px]">
              <rect width="15" height="12" fill="#6bbcf5" />
              <path d="M0 2.500h15M0 5.500h15M0 8.500h15M3.500 2v10M7.500 2v10M11.500 2v10" stroke="#245a8c" />
            </svg>
          </button>
          <button type="button" aria-label="ページ レイアウト表示" className="flex flex-1 items-center justify-center border-l border-[#555]">
            <svg viewBox="0 0 19 12" className="h-3 w-[19px]" fill="none" stroke="#333">
              <path d="M.5.5h8v11h-8zM10.500.5h8v11h-8z" fill="#fff" />
              <path d="M2 3.500h5M2 6h5M2 8.500h5M12 3.500h5M12 6h5M12 8.500h5" strokeDasharray="2 1" strokeWidth="1.500" />
            </svg>
          </button>
        </div>
      </div>
      <div className="min-w-0 flex-1">
        <SheetTabs />
        <StatusBar />
      </div>
    </div>
  )
}

export default function App() {
  return (
    <div className="flex h-screen flex-col overflow-hidden bg-[#ececec] font-['Noto_Sans_CJK_JP',sans-serif] text-black">
      <Toolbar />
      <RibbonTabs />
      <Ribbon />
      <FormulaBar />
      <div className="h-[3px] shrink-0 border-b border-[#8f8f8f]" />
      <Sheet />
      <Bottom />
    </div>
  )
}
